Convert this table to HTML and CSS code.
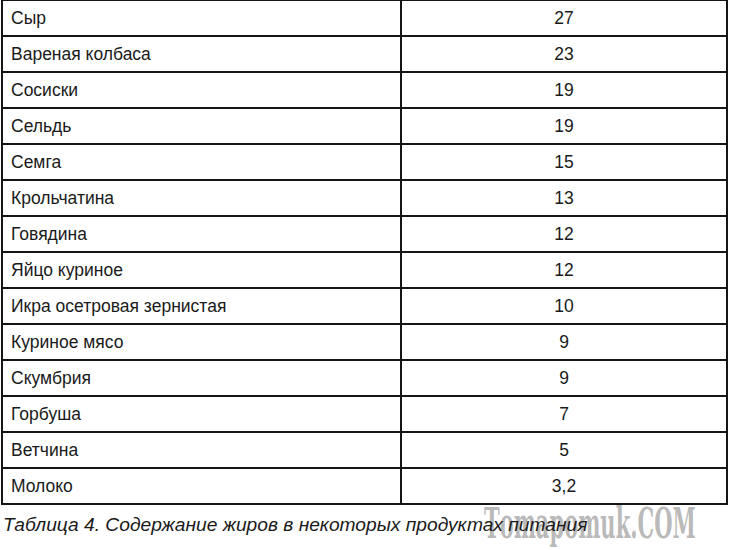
FILE: index.html
```html
<!DOCTYPE html>
<html lang="ru">
<head>
<meta charset="utf-8">
<link rel="stylesheet" href="styles.css">
</head>
<body>
<div class="page">
<table class="fat">
<tbody>
<tr><td class="name">Сыр</td><td class="val">27</td></tr>
<tr><td class="name">Вареная колбаса</td><td class="val">23</td></tr>
<tr><td class="name">Сосиски</td><td class="val">19</td></tr>
<tr><td class="name">Сельдь</td><td class="val">19</td></tr>
<tr><td class="name">Семга</td><td class="val">15</td></tr>
<tr><td class="name">Крольчатина</td><td class="val">13</td></tr>
<tr><td class="name">Говядина</td><td class="val">12</td></tr>
<tr><td class="name">Яйцо куриное</td><td class="val">12</td></tr>
<tr><td class="name">Икра осетровая зернистая</td><td class="val">10</td></tr>
<tr><td class="name">Куриное мясо</td><td class="val">9</td></tr>
<tr><td class="name">Скумбрия</td><td class="val">9</td></tr>
<tr><td class="name">Горбуша</td><td class="val">7</td></tr>
<tr><td class="name">Ветчина</td><td class="val">5</td></tr>
<tr><td class="name">Молоко</td><td class="val">3,2</td></tr>
</tbody>
</table>
<div class="caption-row">
<span class="watermark">Тоmароmuk.СОМ</span>
<p class="caption">Таблица 4. Содержание жиров в некоторых продуктах питания</p>
</div>
</div>
</body>
</html>
```
FILE: styles.css
```css
html, body {
  margin: 0;
  padding: 0;
  background: #fff;
}
.page {
  padding: 0 1px;
  font-family: "Liberation Sans", Arial, sans-serif;
  color: #1a1a1a;
}
.fat {
  width: 727px;
  border-collapse: collapse;
  font-size: 17.5px;
}
.fat td {
  border: 2px solid #151515;
  height: 34px;
  padding: 0;
  vertical-align: middle;
}
.fat tr:first-child td {
  border-top-width: 1px;
}
.name {
  width: 389px;
  padding-left: 8px !important;
}
.val {
  text-align: center;
}
.caption-row {
  position: relative;
  height: 46px;
}
.caption {
  position: relative;
  margin: 0;
  padding: 9px 0 0 2px;
  font-style: italic;
  font-size: 19.2px;
  line-height: 22px;
  color: #1a1a1a;
}
.watermark {
  position: absolute;
  left: 483px;
  top: -6px;
  font-family: "DejaVu Serif", serif;
  font-weight: bold;
  font-size: 42px;
  transform: scaleX(0.5);
  transform-origin: left top;
  white-space: nowrap;
  color: rgba(140, 140, 140, 0.6);
}
```
